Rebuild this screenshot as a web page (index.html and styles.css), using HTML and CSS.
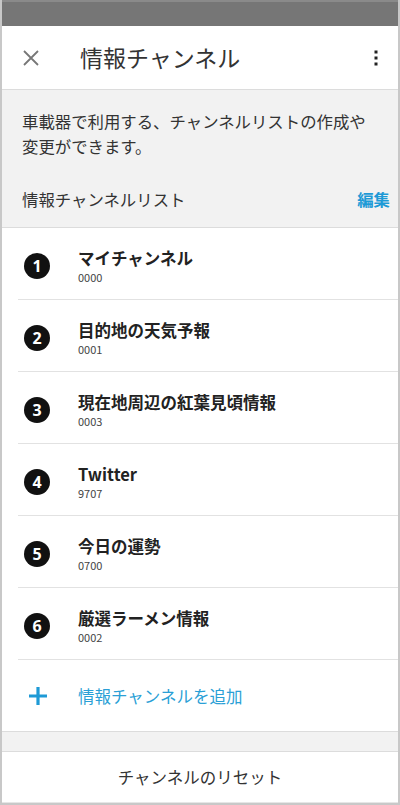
FILE: index.html
```html
<!DOCTYPE html>
<html lang="ja">
<head>
    <meta charset="UTF-8">
    <meta name="viewport" content="width=device-width, initial-scale=1.0">
    <title>情報チャンネル</title>
    <link rel="stylesheet" href="styles.css">
</head>
<body>
    <div class="frame">
        <div class="status-bar"></div>

        <header class="app-bar">
            <svg class="close-icon" width="18" height="18" viewBox="0 0 18 18">
                <path d="M2 2 L16 16 M16 2 L2 16" stroke="#777" stroke-width="1.8" fill="none"/>
            </svg>
            <h1 class="title">情報チャンネル</h1>
            <svg class="menu-icon" width="6" height="18" viewBox="0 0 6 18">
                <rect x="1.5" y="1.5" width="3" height="3" fill="#222"/>
                <rect x="1.5" y="7.5" width="3" height="3" fill="#222"/>
                <rect x="1.5" y="13.5" width="3" height="3" fill="#222"/>
            </svg>
        </header>

        <section class="intro">
            <p class="description">車載器で利用する、チャンネルリストの作成や変更ができます。</p>
            <div class="list-header">
                <span>情報チャンネルリスト</span>
                <span class="edit">編集</span>
            </div>
        </section>

        <ul class="channels">
            <li class="channel">
                <span class="num">1</span>
                <div class="info">
                    <div class="name">マイチャンネル</div>
                    <div class="code">0000</div>
                </div>
            </li>
            <li class="channel">
                <span class="num">2</span>
                <div class="info">
                    <div class="name">目的地の天気予報</div>
                    <div class="code">0001</div>
                </div>
            </li>
            <li class="channel">
                <span class="num">3</span>
                <div class="info">
                    <div class="name">現在地周辺の紅葉見頃情報</div>
                    <div class="code">0003</div>
                </div>
            </li>
            <li class="channel">
                <span class="num">4</span>
                <div class="info">
                    <div class="name">Twitter</div>
                    <div class="code">9707</div>
                </div>
            </li>
            <li class="channel">
                <span class="num">5</span>
                <div class="info">
                    <div class="name">今日の運勢</div>
                    <div class="code">0700</div>
                </div>
            </li>
            <li class="channel">
                <span class="num">6</span>
                <div class="info">
                    <div class="name">厳選ラーメン情報</div>
                    <div class="code">0002</div>
                </div>
            </li>
        </ul>

        <div class="add-row">
            <svg class="plus-icon" width="20" height="20" viewBox="0 0 20 20">
                <path d="M10 1 V19 M1 10 H19" stroke="#1e9ad6" stroke-width="3.2" fill="none"/>
            </svg>
            <span>情報チャンネルを追加</span>
        </div>

        <div class="spacer"></div>

        <div class="reset">チャンネルのリセット</div>
    </div>
</body>
</html>
```

FILE: styles.css
```css
* {
    box-sizing: border-box;
}

body {
    margin: 0;
    font-family: "Noto Sans CJK JP", "Noto Sans", sans-serif;
    color: #333;
    background: #fff;
}

.frame {
    width: 400px;
    height: 805px;
    border: 2px solid #c8c8c8;
    border-top: none;
    overflow: hidden;
    display: flex;
    flex-direction: column;
}

.status-bar {
    height: 26px;
    background: #767676;
    border-top: 2px solid #8a8a8a;
    margin: 0 -2px;
}

.app-bar {
    height: 64px;
    display: flex;
    align-items: center;
    padding: 0 20px 0 20px;
    border-bottom: 1px solid #dcdcdc;
}

.close-icon {
    flex-shrink: 0;
}

.title {
    margin: 0 0 0 40px;
    font-size: 23px;
    font-weight: 400;
    color: #333;
    flex: 1;
    line-height: 1;
}

.menu-icon {
    flex-shrink: 0;
    margin-right: -1px;
}

.intro {
    background: #f2f2f2;
    height: 138px;
    padding: 19px 8px 0 20px;
    border-bottom: 1px solid #dcdcdc;
}

.description {
    margin: 0;
    width: 356px;
    font-size: 16.4px;
    line-height: 25px;
}

.list-header {
    margin-top: 24px;
    display: flex;
    justify-content: space-between;
    align-items: center;
    font-size: 16.4px;
    line-height: 32px;
}

.edit {
    color: #1e9ad6;
    font-weight: 700;
}

.channels {
    list-style: none;
    margin: 0;
    padding: 0;
}

.channel {
    height: 72px;
    display: flex;
    align-items: flex-start;
    margin-left: 16px;
    border-bottom: 1px solid #e2e2e2;
}

.num {
    width: 26px;
    height: 26px;
    margin: 25px 0 0 6px;
    border-radius: 50%;
    background: #111;
    color: #fff;
    font-family: "Noto Sans", sans-serif;
    font-weight: 700;
    font-size: 16px;
    line-height: 26px;
    text-align: center;
    flex-shrink: 0;
}

.info {
    margin-left: 28px;
    padding-top: 19px;
}

.name {
    font-size: 16.5px;
    font-weight: 700;
    line-height: 22px;
    color: #222;
}

.code {
    font-size: 11px;
    line-height: 16px;
    color: #444;
}

.add-row {
    height: 72px;
    display: flex;
    align-items: center;
    padding-left: 26px;
    color: #2a9fd6;
    font-size: 16.5px;
    border-bottom: 1px solid #dcdcdc;
}

.add-row span {
    margin-left: 30px;
}

.spacer {
    height: 20px;
    background: #f2f2f2;
    border-bottom: 1px solid #dcdcdc;
}

.reset {
    flex: 1;
    display: flex;
    align-items: center;
    justify-content: center;
    font-size: 16.5px;
    color: #333;
    border-bottom: 1px solid #e6e6e6;
}
```
